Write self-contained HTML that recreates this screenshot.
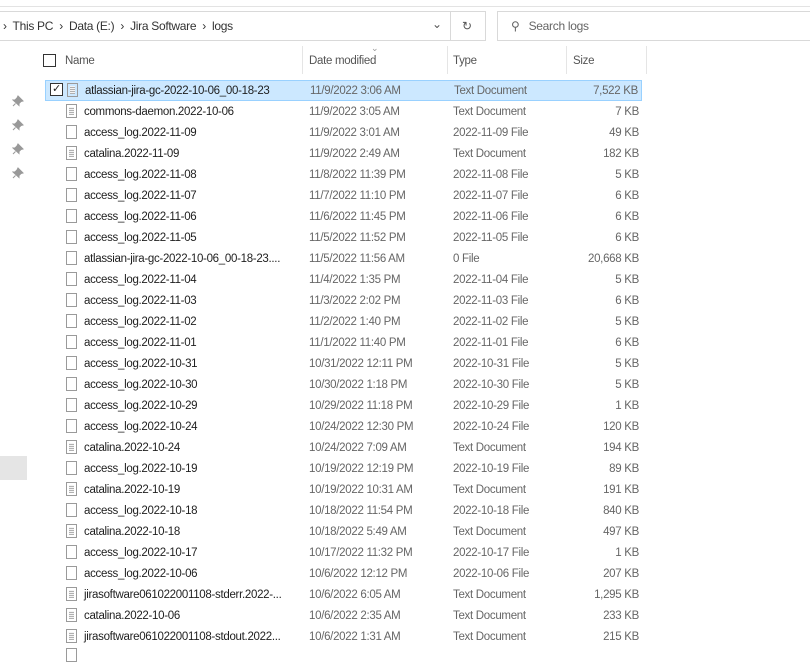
<!DOCTYPE html>
<html><head><meta charset="utf-8"><style>
*{margin:0;padding:0;box-sizing:border-box}
body{width:810px;height:649px;overflow:hidden;background:#fff;font-family:"Liberation Sans",sans-serif;font-size:11.5px;letter-spacing:-0.3px;color:#1e1e1e;position:relative}
.a{position:absolute;white-space:nowrap}
.row{position:absolute;left:45px;width:597px;height:21px}
.row span{position:absolute;top:5px;white-space:nowrap}
.n{left:39px}.d{left:264px;color:#666}.t{left:408px;color:#666}.s{right:3px;color:#666}
.ic{position:absolute;left:21px;top:3px;width:11px;height:14px;border:1px solid #9a9a9a;background:#fff}
.doc .ic{background:repeating-linear-gradient(#f4f4f4 0 1px,#b0b0b0 1px 2px);background-clip:content-box;padding:2px 2px;background-color:#f4f4f4}
.pin{position:absolute;left:12px}
</style></head><body>
<div class="a" style="left:0;top:6px;width:810px;height:1px;background:#e3e3e3"></div>
<div class="a" style="left:0;top:11px;width:486px;height:30px;border:1px solid #d9d9d9;border-left:none"></div>
<div class="a" style="left:450px;top:11px;width:1px;height:30px;background:#d9d9d9"></div>
<div class="a" style="left:3px;top:19px;font-size:12px;color:#333">›&nbsp; This PC &nbsp;›&nbsp; Data (E:) &nbsp;›&nbsp; Jira Software &nbsp;›&nbsp; logs</div>
<div class="a" style="left:432px;top:17px;font-size:12px;color:#555">⌄</div>
<div class="a" style="left:462px;top:19px;font-size:12px;color:#555">↻</div>
<div class="a" style="left:497px;top:11px;width:313px;height:30px;border:1px solid #d9d9d9;border-right:none"></div>
<div class="a" style="left:511px;top:19px;font-size:12px;color:#666">⚲&nbsp;&nbsp; Search logs</div>
<div class="a" style="left:43px;top:54px;width:13px;height:13px;border:1px solid #333"></div>
<div class="a" style="left:65px;top:55px;color:#555">Name</div>
<div class="a" style="left:309px;top:55px;color:#555">Date modified</div>
<div class="a" style="left:371px;top:43px;color:#999;font-size:9px">⌄</div>
<div class="a" style="left:453px;top:55px;color:#555">Type</div>
<div class="a" style="left:573px;top:55px;color:#555">Size</div>
<div class="a" style="left:302px;top:46px;width:1px;height:28px;background:#e5e5e5"></div>
<div class="a" style="left:447px;top:46px;width:1px;height:28px;background:#e5e5e5"></div>
<div class="a" style="left:566px;top:46px;width:1px;height:28px;background:#e5e5e5"></div>
<div class="a" style="left:646px;top:46px;width:1px;height:28px;background:#e5e5e5"></div>
<div class="a" style="left:0;top:456px;width:27px;height:24px;background:#e5e5e5"></div>
<svg class="pin" style="top:95px" width="12" height="12" viewBox="0 0 12 12"><path d="M6 1l5 5-2 .5-2 2 0 2L1 5h2l2-2z M3.5 8.5L1 11" fill="#999" stroke="#999" stroke-width="1"/></svg>
<svg class="pin" style="top:119px" width="12" height="12" viewBox="0 0 12 12"><path d="M6 1l5 5-2 .5-2 2 0 2L1 5h2l2-2z M3.5 8.5L1 11" fill="#999" stroke="#999" stroke-width="1"/></svg>
<svg class="pin" style="top:143px" width="12" height="12" viewBox="0 0 12 12"><path d="M6 1l5 5-2 .5-2 2 0 2L1 5h2l2-2z M3.5 8.5L1 11" fill="#999" stroke="#999" stroke-width="1"/></svg>
<svg class="pin" style="top:167px" width="12" height="12" viewBox="0 0 12 12"><path d="M6 1l5 5-2 .5-2 2 0 2L1 5h2l2-2z M3.5 8.5L1 11" fill="#999" stroke="#999" stroke-width="1"/></svg>

<div class="row doc" style="top:80px;background:#cce8ff;border:1px solid #99d1ff"><div class="a" style="left:4px;top:2px;width:13px;height:13px;border:1px solid #333;background:#fff;font-size:11px;line-height:11px;text-align:center">✓</div><i class="ic" style="top:2px"></i><span class="n" style="top:4px">atlassian-jira-gc-2022-10-06_00-18-23</span><span class="d" style="top:4px">11/9/2022 3:06 AM</span><span class="t" style="top:4px">Text Document</span><span class="s" style="top:4px">7,522 KB</span></div>
<div class="row doc" style="top:101px"><i class="ic"></i><span class="n">commons-daemon.2022-10-06</span><span class="d">11/9/2022 3:05 AM</span><span class="t">Text Document</span><span class="s">7 KB</span></div>
<div class="row" style="top:122px"><i class="ic"></i><span class="n">access_log.2022-11-09</span><span class="d">11/9/2022 3:01 AM</span><span class="t">2022-11-09 File</span><span class="s">49 KB</span></div>
<div class="row doc" style="top:143px"><i class="ic"></i><span class="n">catalina.2022-11-09</span><span class="d">11/9/2022 2:49 AM</span><span class="t">Text Document</span><span class="s">182 KB</span></div>
<div class="row" style="top:164px"><i class="ic"></i><span class="n">access_log.2022-11-08</span><span class="d">11/8/2022 11:39 PM</span><span class="t">2022-11-08 File</span><span class="s">5 KB</span></div>
<div class="row" style="top:185px"><i class="ic"></i><span class="n">access_log.2022-11-07</span><span class="d">11/7/2022 11:10 PM</span><span class="t">2022-11-07 File</span><span class="s">6 KB</span></div>
<div class="row" style="top:206px"><i class="ic"></i><span class="n">access_log.2022-11-06</span><span class="d">11/6/2022 11:45 PM</span><span class="t">2022-11-06 File</span><span class="s">6 KB</span></div>
<div class="row" style="top:227px"><i class="ic"></i><span class="n">access_log.2022-11-05</span><span class="d">11/5/2022 11:52 PM</span><span class="t">2022-11-05 File</span><span class="s">6 KB</span></div>
<div class="row" style="top:248px"><i class="ic"></i><span class="n">atlassian-jira-gc-2022-10-06_00-18-23....</span><span class="d">11/5/2022 11:56 AM</span><span class="t">0 File</span><span class="s">20,668 KB</span></div>
<div class="row" style="top:269px"><i class="ic"></i><span class="n">access_log.2022-11-04</span><span class="d">11/4/2022 1:35 PM</span><span class="t">2022-11-04 File</span><span class="s">5 KB</span></div>
<div class="row" style="top:290px"><i class="ic"></i><span class="n">access_log.2022-11-03</span><span class="d">11/3/2022 2:02 PM</span><span class="t">2022-11-03 File</span><span class="s">6 KB</span></div>
<div class="row" style="top:311px"><i class="ic"></i><span class="n">access_log.2022-11-02</span><span class="d">11/2/2022 1:40 PM</span><span class="t">2022-11-02 File</span><span class="s">5 KB</span></div>
<div class="row" style="top:332px"><i class="ic"></i><span class="n">access_log.2022-11-01</span><span class="d">11/1/2022 11:40 PM</span><span class="t">2022-11-01 File</span><span class="s">6 KB</span></div>
<div class="row" style="top:353px"><i class="ic"></i><span class="n">access_log.2022-10-31</span><span class="d">10/31/2022 12:11 PM</span><span class="t">2022-10-31 File</span><span class="s">5 KB</span></div>
<div class="row" style="top:374px"><i class="ic"></i><span class="n">access_log.2022-10-30</span><span class="d">10/30/2022 1:18 PM</span><span class="t">2022-10-30 File</span><span class="s">5 KB</span></div>
<div class="row" style="top:395px"><i class="ic"></i><span class="n">access_log.2022-10-29</span><span class="d">10/29/2022 11:18 PM</span><span class="t">2022-10-29 File</span><span class="s">1 KB</span></div>
<div class="row" style="top:416px"><i class="ic"></i><span class="n">access_log.2022-10-24</span><span class="d">10/24/2022 12:30 PM</span><span class="t">2022-10-24 File</span><span class="s">120 KB</span></div>
<div class="row doc" style="top:437px"><i class="ic"></i><span class="n">catalina.2022-10-24</span><span class="d">10/24/2022 7:09 AM</span><span class="t">Text Document</span><span class="s">194 KB</span></div>
<div class="row" style="top:458px"><i class="ic"></i><span class="n">access_log.2022-10-19</span><span class="d">10/19/2022 12:19 PM</span><span class="t">2022-10-19 File</span><span class="s">89 KB</span></div>
<div class="row doc" style="top:479px"><i class="ic"></i><span class="n">catalina.2022-10-19</span><span class="d">10/19/2022 10:31 AM</span><span class="t">Text Document</span><span class="s">191 KB</span></div>
<div class="row" style="top:500px"><i class="ic"></i><span class="n">access_log.2022-10-18</span><span class="d">10/18/2022 11:54 PM</span><span class="t">2022-10-18 File</span><span class="s">840 KB</span></div>
<div class="row doc" style="top:521px"><i class="ic"></i><span class="n">catalina.2022-10-18</span><span class="d">10/18/2022 5:49 AM</span><span class="t">Text Document</span><span class="s">497 KB</span></div>
<div class="row" style="top:542px"><i class="ic"></i><span class="n">access_log.2022-10-17</span><span class="d">10/17/2022 11:32 PM</span><span class="t">2022-10-17 File</span><span class="s">1 KB</span></div>
<div class="row" style="top:563px"><i class="ic"></i><span class="n">access_log.2022-10-06</span><span class="d">10/6/2022 12:12 PM</span><span class="t">2022-10-06 File</span><span class="s">207 KB</span></div>
<div class="row doc" style="top:584px"><i class="ic"></i><span class="n">jirasoftware061022001108-stderr.2022-...</span><span class="d">10/6/2022 6:05 AM</span><span class="t">Text Document</span><span class="s">1,295 KB</span></div>
<div class="row doc" style="top:605px"><i class="ic"></i><span class="n">catalina.2022-10-06</span><span class="d">10/6/2022 2:35 AM</span><span class="t">Text Document</span><span class="s">233 KB</span></div>
<div class="row doc" style="top:626px"><i class="ic"></i><span class="n">jirasoftware061022001108-stdout.2022...</span><span class="d">10/6/2022 1:31 AM</span><span class="t">Text Document</span><span class="s">215 KB</span></div>
<div class="row" style="top:645px"><i class="ic"></i></div>
</body></html>
